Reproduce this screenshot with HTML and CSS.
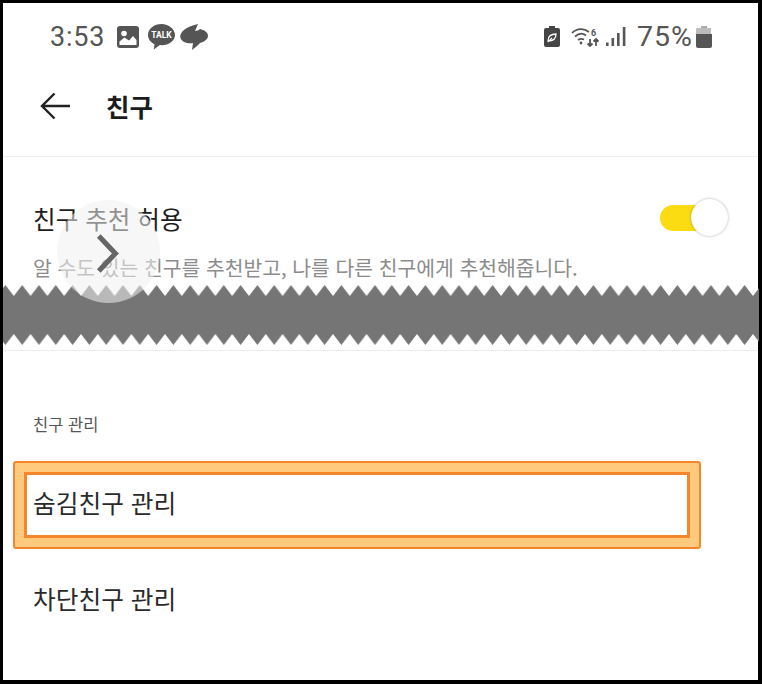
FILE: index.html
```html
<!DOCTYPE html>
<html lang="ko">
<head>
<meta charset="utf-8">
<title>친구</title>
<link rel="stylesheet" href="styles.css">
</head>
<body>
<div class="frame">
  <div class="status">
    <div class="status-left">
      <span class="time">3:53</span>
      <svg class="ic-gallery" viewBox="0 0 22 22"><rect x="0" y="0" width="22" height="22" rx="3" fill="#555"/><circle cx="7" cy="7.500" r="2.800" fill="#fff"/><path d="M2.500 19v-3.500l5-4 4.500 3 4-4.500 3.500 4v5z" fill="#fff"/></svg>
      <svg class="ic-talk" viewBox="0 0 27 26"><path d="M13.500 0C6 0 0 4.800 0 11c0 4 2.600 7.400 6.500 9.300L5.800 25.500l6-4.400c.6.100 1.100.1 1.700.1C21 21.200 27 16.500 27 11S21 0 13.500 0z" fill="#555"/><text x="13.500" y="14" class="talk-text">TALK</text></svg>
      <svg class="ic-swirl" viewBox="0 0 28 26"><path d="M18 0C14 1 6 3 2 8c-3 4-2 8 2 10 3 1.500 7 1.500 9 1l-1 7c3-2 6-5 8-7 4-1 8-4 8-7 0-4-4-6-8-7-1 1-3 2-5 2z" fill="#555"/></svg>
    </div>
    <div class="status-right">
      <svg class="ic-batt-leaf" viewBox="0 0 16 21"><path d="M5 0h6v2h3a2 2 0 0 1 2 2v15a2 2 0 0 1-2 2H2a2 2 0 0 1-2-2V4a2 2 0 0 1 2-2h3z" fill="#454545"/><path d="M4 15c0-5 3-7 8-7 0 5-3 7-8 7zm0 1 4-4" fill="none" stroke="#fff" stroke-width="1.300"/></svg>
      <svg class="ic-wifi" viewBox="0 0 30 20"><g fill="none" stroke="#555" stroke-width="1.800"><path d="M1 6c5-5 12-5 17-1"/><path d="M4 9.500c4-3.500 8-3.500 11-1"/><path d="M7 13c2-1.500 4-1.500 6-.5"/><path d="M19 12v7M16.500 16.500 19 19l2.500-2.500M25 19v-7M22.500 14.500 25 12l2.500 2.500"/></g><circle cx="10" cy="16" r="1.400" fill="#555"/><text x="20" y="8.500" class="wifi-six">6</text></svg>
      <svg class="ic-signal" viewBox="0 0 20 20"><g fill="#555"><rect x="0" y="15.500" width="2.600" height="3.500"/><rect x="5.500" y="11" width="2.600" height="8"/><rect x="11" y="6" width="2.600" height="13"/><rect x="16.800" y="0" width="2.600" height="19"/></g></svg>
      <span class="pct">75%</span>
      <svg class="ic-batt" viewBox="0 0 16 22"><rect x="5" y="0" width="6" height="3" fill="#aaa"/><path d="M1 2h14v6H0V3z" fill="#bbb"/><path d="M0 8h16v12a2 2 0 0 1-2 2H2a2 2 0 0 1-2-2z" fill="#555"/></svg>
    </div>
  </div>

  <header class="appbar">
    <svg class="ic-back" viewBox="0 0 30 28"><path d="M30 14H2M14.500 1.500 2 14l12.500 12.500" fill="none" stroke="#222" stroke-width="2.400"/></svg>
    <h1 class="title">친구</h1>
  </header>

  <section class="toggle-section">
    <div class="toggle-row">
      <span class="row-title">친구 추천 허용</span>
      <span class="switch"><span class="knob"></span></span>
    </div>
    <p class="row-desc">알 수도 있는 친구를 추천받고, 나를 다른 친구에게 추천해줍니다.</p>
    <div class="swipe-hint">
      <svg class="ic-chevron" viewBox="0 0 26 44"><path d="M3 3l18 19L3 41" fill="none" stroke="#666" stroke-width="5.500"/></svg>
    </div>
  </section>

  <svg class="torn" viewBox="0 0 756 62" preserveAspectRatio="none">
    <defs>
      <pattern id="teeth" width="16.800" height="62" patternUnits="userSpaceOnUse" x="-6">
        <path d="M0 11 8.400 0 16.800 11V49L8.400 60 0 49z" fill="#757575"/>
      </pattern>
    </defs>
    <rect width="756" height="62" fill="url(#teeth)"/>
  </svg>

  <section class="manage">
    <h2 class="section-label">친구 관리</h2>
    <div class="mark"><div class="mark-inner"><span class="item-text">숨김친구 관리</span></div></div>
    <div class="item"><span class="item-text">차단친구 관리</span></div>
  </section>
</div>
</body>
</html>
```
FILE: styles.css
```css
* { box-sizing: border-box; }
html, body { margin: 0; padding: 0; background: #000; }
body { width: 762px; height: 684px; overflow: hidden; }
.frame {
  width: 762px;
  height: 684px;
  border: solid #000;
  border-width: 3px 4px 4px 3px;
  background: #fff;
  font-family: "Noto Sans CJK KR", "Noto Sans", sans-serif;
  display: flex;
  flex-direction: column;
}
.status {
  height: 62px;
  padding: 5px 46px 0 47px;
  display: flex;
  justify-content: space-between;
  align-items: center;
  flex: none;
}
.status-left, .status-right { display: flex; align-items: center; }
.time { font: 27px/32px Roboto, sans-serif; color: #555; letter-spacing: 0.8px; width: 58px; }
.ic-gallery { width: 22px; height: 22px; margin-left: 9px; }
.ic-talk { width: 27px; height: 26px; margin-left: 9px; }
.talk-text { font: 700 8.500px Roboto, sans-serif; fill: #fff; text-anchor: middle; }
.ic-swirl { width: 28px; height: 26px; margin-left: 5px; }
.ic-batt-leaf { width: 16px; height: 21px; }
.ic-wifi { width: 30px; height: 20px; margin-left: 11px; }
.wifi-six { font: 700 9px Roboto, sans-serif; fill: #555; }
.ic-signal { width: 20px; height: 20px; margin-left: 5px; }
.pct { font: 28.500px/32px Roboto, sans-serif; color: #555; margin-left: 11px; letter-spacing: 1px; width: 56px; }
.ic-batt { width: 16px; height: 22px; margin-left: 3px; }

.appbar {
  height: 92px;
  flex: none;
  padding: 0 0 10px 37px;
  display: flex;
  align-items: center;
  border-bottom: 1px solid #eee;
}
.ic-back { width: 30px; height: 28px; }
.title { margin: 0 0 0 36px; font-size: 25.500px; line-height: 32px; font-weight: 700; color: #1c1c1c; }

.toggle-section { position: relative; height: 128px; flex: none; padding: 30px 30px 0; }
.toggle-row { height: 62px; display: flex; justify-content: space-between; align-items: center; }
.row-title { font-size: 24.600px; line-height: 30px; color: #1e1e1e; }
.switch { width: 68px; height: 26px; border-radius: 13px; position: relative; background: linear-gradient(to right, #fbdc13 0 50px, transparent 50px); }
.knob {
  position: absolute; right: 0; top: -6px;
  width: 37px; height: 37px; border-radius: 50%;
  background: #fff; box-shadow: 0 0 3px rgba(0,0,0,.3);
}
.row-desc { margin: 6px 0 0; font-size: 20.400px; line-height: 24px; color: #8c8c8c; white-space: nowrap; }
.swipe-hint {
  position: absolute; left: 54px; top: 43px;
  width: 103px; height: 103px; border-radius: 50%;
  background: rgba(240,240,240,.55);
  display: flex; align-items: center; justify-content: center;
}
.ic-chevron { width: 24px; height: 41px; margin-top: 3px; margin-left: -1px; }

.torn { display: block; width: 756px; height: 62px; flex: none; }

.manage { border-top: 1px solid #eee; margin-top: 3px; padding-top: 61px; flex: 1; }
.section-label { margin: 0 0 0 30px; font-size: 16.500px; line-height: 24px; font-weight: 400; color: #555; }
.mark {
  margin: 25px 0 0 10px;
  width: 688px; height: 88px;
  border: 2px solid #f5862b;
  border-radius: 3px;
  background: #ffc97e;
  padding: 9px;
}
.mark-inner {
  height: 100%;
  border: 3px solid #f5862b;
  background: #fff;
  padding: 0 0 6px 6px;
  display: flex; align-items: center;
}
.item { margin: 33px 0 0 30px; }
.item-text { font-size: 24.700px; line-height: 32px; color: #2a2a2a; }
```
